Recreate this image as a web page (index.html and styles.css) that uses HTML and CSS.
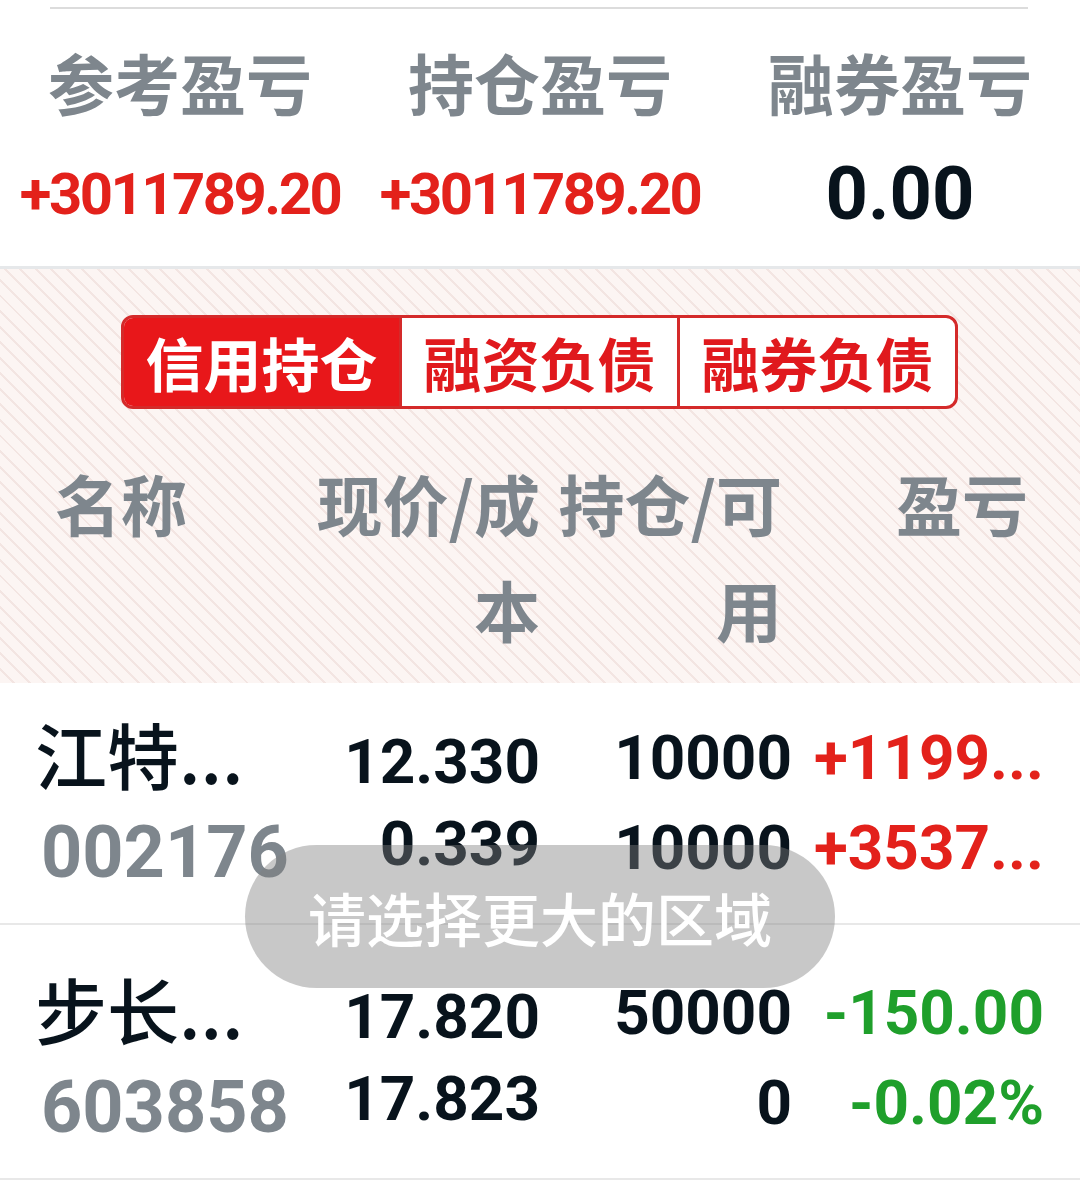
FILE: index.html
```html
<!DOCTYPE html>
<html lang="zh-CN">
<head>
    <meta charset="UTF-8">
    <meta name="viewport" content="width=device-width, initial-scale=1.0">
    <title>信用持仓</title>
    <link rel="stylesheet" href="styles.css">
</head>
<body>
    <!-- 盈亏汇总 -->
    <section class="summary">
        <div class="summary-rule"></div>
        <div class="summary-grid">
            <div class="summary-label">参考盈亏</div>
            <div class="summary-label">持仓盈亏</div>
            <div class="summary-label">融券盈亏</div>
            <div class="summary-value up">+3011789.20</div>
            <div class="summary-value up">+3011789.20</div>
            <div class="summary-value zero">0.00</div>
        </div>
    </section>

    <!-- 切换 + 表头 -->
    <section class="panel">
        <div class="tabs">
            <div class="tab active">信用持仓</div>
            <div class="tab">融资负债</div>
            <div class="tab">融券负债</div>
        </div>
        <div class="table-head">
            <div class="th th-name">名称</div>
            <div class="th">现价/成本</div>
            <div class="th">持仓/可用</div>
            <div class="th">盈亏</div>
        </div>
    </section>

    <!-- 持仓列表 -->
    <section class="list">
        <div class="row">
            <div class="cell">
                <div class="stock-name">江特...</div>
                <div class="stock-code">002176</div>
            </div>
            <div class="cell num price">
                <div>12.330</div>
                <div>0.339</div>
            </div>
            <div class="cell num">
                <div>10000</div>
                <div>10000</div>
            </div>
            <div class="cell num up">
                <div>+1199...</div>
                <div>+3537...</div>
            </div>
        </div>
        <div class="row">
            <div class="cell">
                <div class="stock-name">步长...</div>
                <div class="stock-code">603858</div>
            </div>
            <div class="cell num price">
                <div>17.820</div>
                <div>17.823</div>
            </div>
            <div class="cell num">
                <div>50000</div>
                <div>0</div>
            </div>
            <div class="cell num down">
                <div>-150.00</div>
                <div>-0.02%</div>
            </div>
        </div>
    </section>

    <div class="toast">请选择更大的区域</div>
</body>
</html>
```

FILE: styles.css
```css
body {
    margin: 0;
    width: 1080px;
    height: 1193px;
    background-color: #fff;
    font-family: Roboto, "Noto Sans CJK SC", sans-serif;
    color: #08131c;
    position: relative;
    overflow: hidden;
}

.up {
    color: #e3211b;
}

.down {
    color: #1f9f2b;
}

/* 汇总 */
.summary {
    height: 266px;
    border-bottom: 3px solid #e6e8ea;
}

.summary-rule {
    margin: 0 52px 0 50px;
    padding-top: 7px;
    border-bottom: 2px solid #dcdcdc;
}

.summary-grid {
    display: grid;
    grid-template-columns: repeat(3, 360px);
    grid-template-rows: 108px 118px;
    padding-top: 18px;
}

.summary-label {
    font-family: "Noto Sans CJK SC", sans-serif;
    font-size: 66px;
    font-weight: 700;
    color: #7e868d;
    text-align: center;
    line-height: 108px;
}

.summary-value {
    font-size: 58px;
    font-weight: 700;
    letter-spacing: -2.5px;
    text-align: center;
    line-height: 118px;
}

.summary-value.zero {
    font-size: 74px;
    letter-spacing: 0;
    color: #08131c;
}

/* 条纹区域 */
.panel {
    height: 414px;
    background-color: #fcf5f3;
    background-image: repeating-linear-gradient(45deg, #fcf5f3 0, #fcf5f3 9px, #f3e5e2 9px, #f3e5e2 11px);
    padding-top: 46px;
    box-sizing: border-box;
}

.tabs {
    display: flex;
    width: 837px;
    height: 94px;
    margin-left: 121px;
    border: 3px solid #d42a2a;
    border-radius: 12px;
    box-sizing: border-box;
    overflow: hidden;
    background-color: #fff;
}

.tab {
    flex: 1;
    display: flex;
    align-items: center;
    justify-content: center;
    font-family: "Noto Sans CJK SC", sans-serif;
    font-size: 58px;
    font-weight: 700;
    color: #e0191d;
}

.tab + .tab {
    border-left: 3px solid #d42a2a;
}

.tab.active {
    background-color: #e8171a;
    color: #fff;
}

.table-head {
    display: grid;
    grid-template-columns: 235px 250px 242px 246px;
    padding-left: 55px;
    margin-top: 40px;
}

.th {
    font-family: "Noto Sans CJK SC", sans-serif;
    font-size: 66px;
    font-weight: 700;
    line-height: 106px;
    color: #7e868d;
    text-align: right;
}

.th-name {
    text-align: left;
}

/* 列表 */
.row {
    display: grid;
    grid-template-columns: 255px 250px 252px 252px;
    align-items: center;
    height: 242px;
    padding-left: 35px;
    border-bottom: 2px solid #e8e8e8;
    box-sizing: border-box;
}

.row + .row {
    height: 255px;
    padding-top: 12px;
}

.cell {
    line-height: 90px;
    font-size: 62px;
    font-weight: 700;
}

.cell.price {
    line-height: 82px;
}

.num {
    text-align: right;
}

.stock-name {
    font-family: "Noto Sans CJK SC", sans-serif;
    font-size: 72px;
    font-weight: 500;
    line-height: 100px;
    color: #08131c;
}

.stock-code {
    font-size: 72px;
    font-weight: 700;
    line-height: 100px;
    color: #7e868d;
    padding-left: 6px;
}

/* 提示 */
.toast {
    position: absolute;
    left: 245px;
    top: 845px;
    width: 590px;
    height: 143px;
    border-radius: 72px;
    background-color: rgba(128, 128, 128, 0.43);
    color: #fff;
    font-family: "Noto Sans CJK SC", sans-serif;
    font-size: 58px;
    font-weight: 500;
    display: flex;
    align-items: center;
    justify-content: center;
}
```
